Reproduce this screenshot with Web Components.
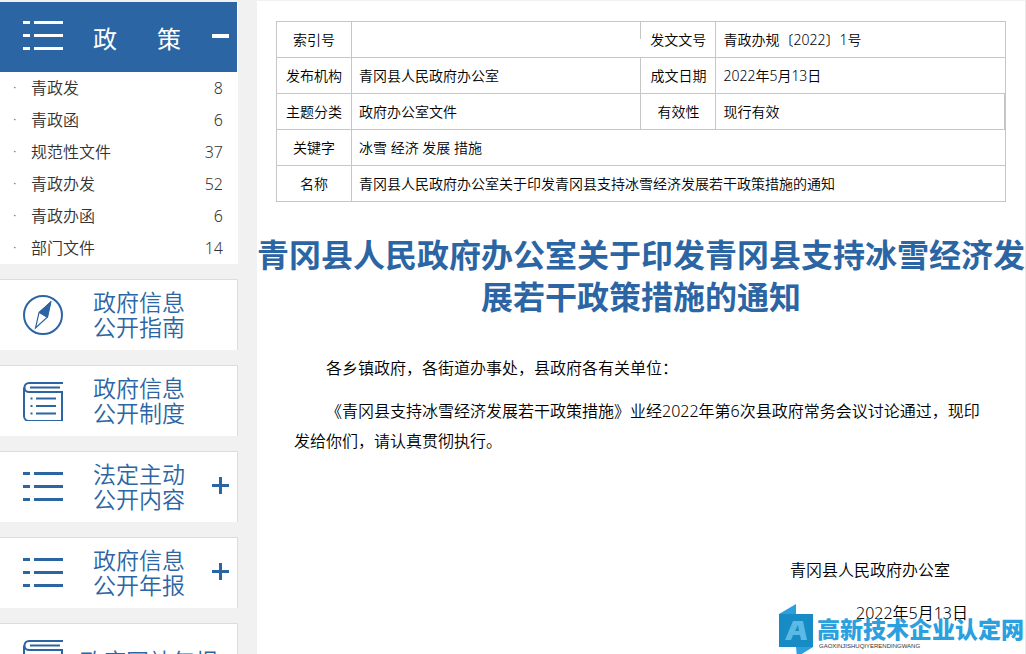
<!DOCTYPE html>
<html lang="zh-CN">
<head>
<meta charset="utf-8">
<title>青冈县政府信息公开</title>
<style>
  body {
    margin: 0;
    background: #f1f1f1;
    color: #000;
    font-family: "Noto Sans", "Noto Sans CJK SC", sans-serif;
  }
</style>
</head>
<body>
<gov-page>
  <policy-menu slot="side">
    <policy-item count="8">青政发</policy-item>
    <policy-item count="6">青政函</policy-item>
    <policy-item count="37">规范性文件</policy-item>
    <policy-item count="52">青政办发</policy-item>
    <policy-item count="6">青政办函</policy-item>
    <policy-item count="14">部门文件</policy-item>
  </policy-menu>
  <nav-card slot="side" icon="compass">政府信息<br>公开指南</nav-card>
  <nav-card slot="side" icon="book">政府信息<br>公开制度</nav-card>
  <nav-card slot="side" icon="list" expandable>法定主动<br>公开内容</nav-card>
  <nav-card slot="side" icon="list" expandable>政府信息<br>公开年报</nav-card>
  <nav-card slot="side" icon="book" wide>政府网站年报</nav-card>

  <doc-meta slot="main"></doc-meta>
  <doc-article slot="main">
    <span slot="title">青冈县人民政府办公室关于印发青冈县支持冰雪经济发展若干政策措施的通知</span>
    <span slot="addressee">各乡镇政府，各街道办事处，县政府各有关单位：</span>
    <span slot="body">《青冈县支持冰雪经济发展若干政策措施》业经2022年第6次县政府常务会议讨论通过，现印发给你们，请认真贯彻执行。</span>
    <span slot="signer">青冈县人民政府办公室</span>
    <span slot="date">2022年5月13日</span>
  </doc-article>
  <site-mark slot="mark"></site-mark>
</gov-page>

<script>
const define = (name, html, setup) => {
  const template = document.createElement('template');
  template.innerHTML = html;
  customElements.define(name, class extends HTMLElement {
    constructor() {
      super();
      this.attachShadow({ mode: 'open' }).append(template.content.cloneNode(true));
    }
    connectedCallback() {
      if (setup) setup(this, this.shadowRoot);
    }
  });
};

const ICONS = {
  list: '<g stroke-width="3"><path d="M0 6.500h7M11 6.500h29M0 19.500h7M11 19.500h29M0 32.500h7M11 32.500h29"/></g>',
  compass: '<g stroke-width="2"><circle cx="20" cy="20" r="19"/></g><path d="M27.500 7.500 16 17.500l-3.500 15.500L24 22.500z" stroke-width="1.200"/><path d="M28 6.500 16 17.500l8.500 5z" fill="currentColor" stroke-width="1"/>',
  book: '<g stroke-width="2"><path d="M40 2H6a4.500 4.500 0 0 0 0 9h33v29H6a5 5 0 0 1-5-5V6.500"/><path d="M7 6.500h30M13 17.500h20M13 25h20M13 32.500h20M7.500 17.500h2M7.500 25h2M7.500 32.500h2"/></g>'
};

define('line-icon', `
  <style>
    :host { display: block; flex: none; width: 40px; height: 40px; }
    svg { display: block; width: 40px; height: 40px; }
  </style>
  <svg viewBox="0 0 40 40" fill="none" stroke="currentColor" aria-hidden="true"></svg>
`, (el, root) => {
  root.querySelector('svg').innerHTML = ICONS[el.getAttribute('name')];
});

define('gov-page', `
  <style>
    :host { display: block; position: relative; height: 100vh; overflow: hidden; }
    .columns { display: grid; grid-template-columns: 238px minmax(0, 1fr); column-gap: 19px; }
    aside { display: flex; flex-direction: column; gap: 15px; padding-top: 2px; }
    main { margin-top: 1px; min-height: 100vh; background: #fff; border-right: 1px solid #e9e9e9; }
  </style>
  <div class="columns">
    <aside><slot name="side"></slot></aside>
    <main><slot name="main"></slot></main>
  </div>
  <slot name="mark"></slot>
`);

define('policy-menu', `
  <style>
    :host { display: block; background: #fff; }
    button {
      display: flex; align-items: center; width: 237px; height: 70px; margin: 0;
      padding: 0 8px 2px 23px; border: 0; background: #2c65a3; color: #fff; font: inherit; cursor: pointer;
    }
    .name { display: flex; flex: 1; gap: 40px; margin-left: 30px; padding-top: 6px; font-size: 24px; line-height: 26px; }
    .minus { width: 17px; height: 4px; background: #fff; }
  </style>
  <button type="button" aria-expanded="true" aria-label="政策">
    <line-icon name="list"></line-icon>
    <span class="name"><span>政</span><span>策</span></span>
    <span class="minus"></span>
  </button>
  <div role="list"><slot></slot></div>
`, (el, root) => {
  const button = root.querySelector('button');
  const list = root.querySelector('[role=list]');
  button.onclick = () => {
    list.hidden = !list.hidden;
    button.setAttribute('aria-expanded', String(!list.hidden));
  };
});

define('policy-item', `
  <style>
    :host { display: block; font-weight: 350; }
    a {
      display: flex; align-items: center; height: 32px; padding: 0 15px 0 13px;
      color: #333; font-size: 16px; line-height: 32px; text-decoration: none;
    }
    .dot { flex: none; width: 18px; font-size: 14px; color: #666; }
    .label { flex: 1; }
  </style>
  <a href="#"><span class="dot">·</span><span class="label"><slot></slot></span><span class="count"></span></a>
`, (el, root) => {
  el.setAttribute('role', 'listitem');
  root.querySelector('.count').textContent = el.getAttribute('count');
});

define('nav-card', `
  <style>
    :host { display: block; }
    a, button {
      display: flex; align-items: center; box-sizing: border-box; width: 100%; height: 71px; margin: 0;
      padding: 0 8px 0 23px; border: 0 solid #ddd; border-width: 1px 1px 0 0; background: #fff;
      color: #2c65a3; font: inherit; font-weight: 350; text-align: left; text-decoration: none; cursor: pointer;
    }
    .label { flex: 1; margin-left: 30px; font-size: 23px; line-height: 25px; white-space: nowrap; }
    :host([wide]) .label { margin-left: 17px; padding-top: 4px; }
    .plus {
      flex: none; width: 17px; height: 17px; margin-bottom: 4px;
      background:
        linear-gradient(#2c65a3, #2c65a3) center / 17px 3px no-repeat,
        linear-gradient(#2c65a3, #2c65a3) center / 3px 17px no-repeat;
    }
  </style>
`, (el, root) => {
  if (root.querySelector('.label')) return;
  const expandable = el.hasAttribute('expandable');
  const control = document.createElement(expandable ? 'button' : 'a');
  if (expandable) control.type = 'button'; else control.href = '#';
  control.innerHTML = `<line-icon name="${el.getAttribute('icon')}"></line-icon>` +
    '<span class="label"><slot></slot></span>' + (expandable ? '<span class="plus"></span>' : '');
  root.append(control);
});

define('doc-meta', `
  <style>
    :host { display: block; padding: 20px 19px 0; }
    table { width: 100%; table-layout: fixed; border-collapse: collapse; font-size: 14px; line-height: 20px; }
    col.key { width: 75px; }
    col.value { width: 39.7%; }
    th, td { box-sizing: border-box; height: 36px; padding: 0 7px; border: 1px solid #c6c6c6; font-weight: 350; text-align: left; }
    th { padding: 0; text-align: center; }
    .open { border-right: 0; background: linear-gradient(#c6c6c6, #c6c6c6) right top / 1px 17px no-repeat; }
    .open + th { border-left: 0; }
    .double { box-shadow: inset -1px 0 #c6c6c6; }
  </style>
  <table>
    <colgroup><col class="key"><col class="value"><col class="key"><col></colgroup>
    <tr><th>索引号</th><td class="open"></td><th>发文文号</th><td>青政办规〔2022〕1号</td></tr>
    <tr><th>发布机构</th><td>青冈县人民政府办公室</td><th>成文日期</th><td>2022年5月13日</td></tr>
    <tr><th>主题分类</th><td>政府办公室文件</td><th>有效性</th><td class="double">现行有效</td></tr>
    <tr><th>关键字</th><td colspan="3">冰雪 经济 发展 措施</td></tr>
    <tr><th>名称</th><td colspan="3">青冈县人民政府办公室关于印发青冈县支持冰雪经济发展若干政策措施的通知</td></tr>
  </table>
`);

define('doc-article', `
  <style>
    :host { display: block; }
    h1 { margin: 32px 0 0; color: #2c65a3; font-size: 32px; line-height: 42px; font-weight: 700; text-align: center; }
    .text { display: flex; flex-direction: column; gap: 13px; padding: 35px 37px 0; font-size: 16px; line-height: 30px; font-weight: 350; }
    p { margin: 0; text-indent: 2em; }
    .signer, .date { text-align: right; text-indent: 0; }
    .signer { margin-top: 86px; padding-right: 38px; }
    .date { padding-right: 20px; }
  </style>
  <h1><slot name="title"></slot></h1>
  <div class="text">
    <p><slot name="addressee"></slot></p>
    <p><slot name="body"></slot></p>
    <p class="signer"><slot name="signer"></slot></p>
    <p class="date"><slot name="date"></slot></p>
  </div>
`);

define('site-mark', `
  <style>
    :host { display: flex; gap: 4px; position: absolute; right: 2px; bottom: 0; color: #2ba0de; }
    svg { display: block; width: 34px; height: 50px; }
    .words { display: flex; flex-direction: column; padding-top: 12px; }
    .name { font-size: 23px; line-height: 26px; font-weight: 900; white-space: nowrap; }
    .latin { padding-left: 2px; color: #333; font: 6px/8px "Liberation Sans", sans-serif; }
  </style>
  <svg viewBox="0 0 34 50" aria-hidden="true">
    <path d="M0 10 17 0v10zM17 43h17L18 53z" fill="#2ba0de"/>
    <path d="M0 10h34v33H0z" fill="#168bc4"/>
    <path d="M6 36 14 17h10l4 19h-6l-1-5h-7l-2 5zM16 27h4l-1-6z" fill="#5bb9e6" fill-rule="evenodd"/>
  </svg>
  <div class="words">
    <span class="name">高新技术企业认定网</span>
    <span class="latin">GAOXINJISHUQIYERENDINGWANG</span>
  </div>
`);
</script>
</body>
</html>
